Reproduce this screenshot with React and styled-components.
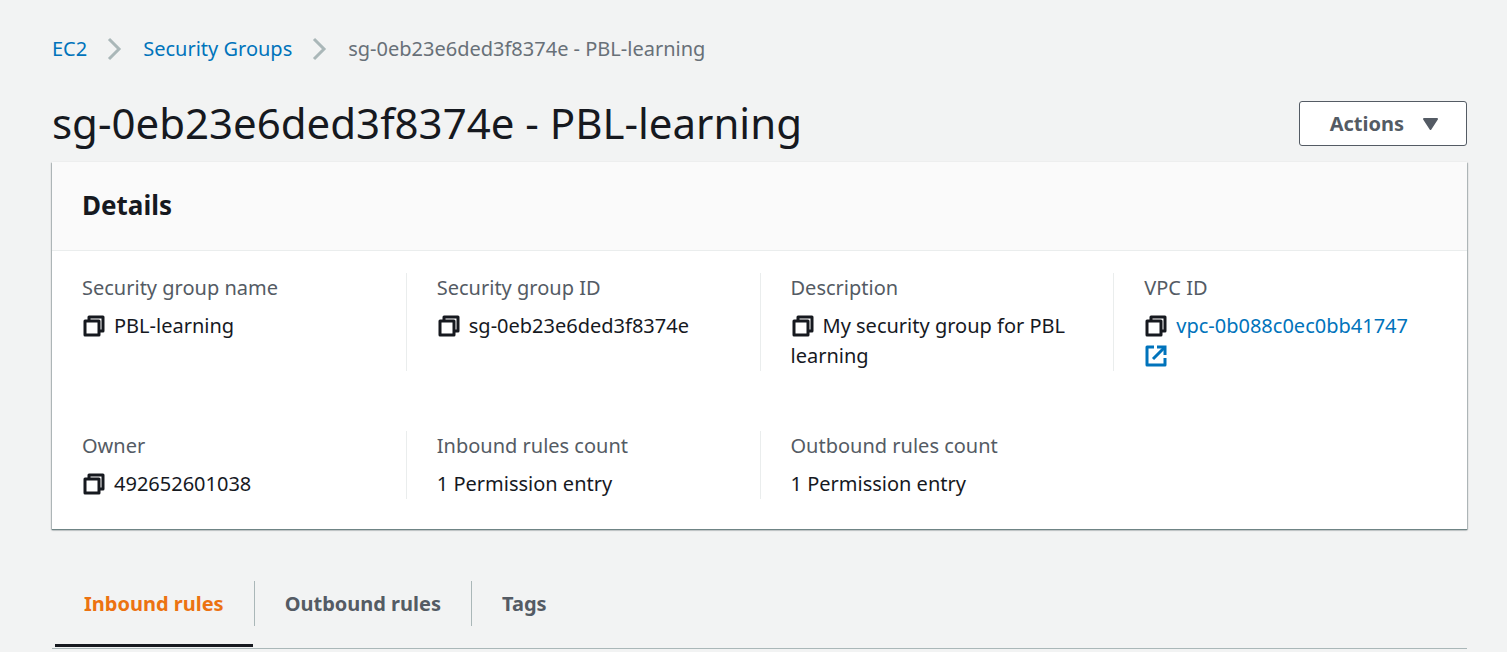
import React from "react";
import styled, { createGlobalStyle } from "styled-components";

const GlobalStyle = createGlobalStyle`
  * { box-sizing: border-box; }
  body {
    margin: 0;
    background: #f2f3f3;
    color: #16191f;
    font-family: "Noto Sans", "Open Sans", sans-serif;
    font-size: 20px;
    line-height: 30px;
  }
  a { color: #0073bb; text-decoration: none; }
`;

const Page = styled.main`
  padding: 34px 40px 0 52px;
`;

const Crumbs = styled.ol`
  display: flex;
  align-items: center;
  gap: 16px;
  margin: 0;
  padding: 0;
  list-style: none;
  color: #687078;
`;

const Crumb = styled.li`
  display: flex;
  align-items: center;
  gap: 16px;
`;

const TitleRow = styled.header`
  display: flex;
  align-items: center;
  justify-content: space-between;
  padding: 29px 0 9px;
`;

const Title = styled.h1`
  margin: 0;
  font-size: 42px;
  font-weight: 400;
  line-height: 60px;
`;

const ActionsButton = styled.button`
  display: flex;
  align-items: center;
  gap: 17px;
  height: 45px;
  padding: 1px 27px 0 30px;
  border: 1px solid #545b64;
  border-radius: 3px;
  background: #fff;
  color: #545b64;
  font: inherit;
  font-weight: 700;
`;

const Panel = styled.section`
  background: #fff;
  box-shadow: 0 1px 1px 0 #6f8485, 0 1px 2px 0 rgba(0, 28, 36, 0.3),
    1px 1px 1px 0 rgba(0, 28, 36, 0.15), -1px 1px 1px 0 rgba(0, 28, 36, 0.15);
`;

const PanelHeader = styled.div`
  padding: 25px 30px 27px;
  border-bottom: 1px solid #eaeded;
  background: #fafafa;
`;

const PanelTitle = styled.h2`
  margin: 0;
  font-size: 26px;
  font-weight: 700;
  line-height: 36px;
`;

const Details = styled.dl`
  display: grid;
  grid-template-columns: repeat(4, 1fr);
  row-gap: 60px;
  margin: 0;
  padding: 22px 0 30px;
`;

const Field = styled.div`
  padding: 0 30px;
  border-left: 1px solid #eaeded;
  &:nth-child(4n + 1) { border-left: 0; }
`;

const Label = styled.dt`
  margin-bottom: 8px;
  color: #545b64;
`;

const Value = styled.dd`
  margin: 0;
`;

const CopyButton = styled.button`
  display: inline;
  margin: 0 8px 0 0;
  padding: 0;
  border: 0;
  background: none;
  color: inherit;
  font: inherit;
`;

const Icon = styled.svg`
  display: inline-block;
  width: ${(p) => p.$size}px;
  height: ${(p) => p.$size}px;
  vertical-align: -5px;
`;

const Tabs = styled.div`
  display: flex;
  margin-top: 52px;
  padding-left: 2px;
  border-bottom: 1px solid #aab7b8;
`;

const Tab = styled.button`
  position: relative;
  height: 45px;
  margin-bottom: 22px;
  padding: 0 30px;
  border: 0;
  border-right: 1px solid #aab7b8;
  background: none;
  color: ${(p) => (p.$active ? "#ec7211" : "#545b64")};
  font: inherit;
  font-weight: 700;
  &:last-child { border-right: 0; }
  &::after {
    content: "";
    position: absolute;
    right: 1px;
    bottom: -21px;
    left: 1px;
    height: 3px;
    background: ${(p) => (p.$active ? "#16191f" : "transparent")};
  }
`;

const Chevron = () => (
  <Icon $size={24} viewBox="0 0 24 24" fill="none" stroke="#aab7b8" strokeWidth="3" aria-hidden="true">
    <path d="M6 2 L16 12 L6 22" />
  </Icon>
);

const Caret = () => (
  <Icon $size={18} viewBox="0 0 18 18" fill="currentColor" stroke="currentColor" strokeWidth="2" strokeLinejoin="round" aria-hidden="true">
    <path d="M3 4 H16 L9.500 14 Z" />
  </Icon>
);

const Copy = ({ text }) => (
  <CopyButton aria-label={`Copy ${text}`}>
    <Icon $size={24} viewBox="0 0 24 24" fill="none" stroke="currentColor" strokeWidth="3" strokeLinejoin="round">
      <path d="M7 7 V3 H21 V17 H17" />
      <path d="M3 7 H17 V21 H3 Z" />
    </Icon>
  </CopyButton>
);

const External = () => (
  <Icon $size={24} viewBox="0 0 24 24" fill="none" stroke="currentColor" strokeWidth="3" role="img" aria-label="Opens in a new tab">
    <path d="M10 3 H3 V21 H21 V14" strokeLinejoin="round" />
    <path d="M13 3 H21 V11" />
    <path d="M20 4 L9 15" />
  </Icon>
);

const fields = [
  { label: "Security group name", value: "PBL-learning", copy: true },
  { label: "Security group ID", value: "sg-0eb23e6ded3f8374e", copy: true },
  { label: "Description", value: "My security group for PBL learning", copy: true },
  { label: "VPC ID", value: "vpc-0b088c0ec0bb41747", copy: true, link: true },
  { label: "Owner", value: "492652601038", copy: true },
  { label: "Inbound rules count", value: "1 Permission entry" },
  { label: "Outbound rules count", value: "1 Permission entry" },
];

const tabs = ["Inbound rules", "Outbound rules", "Tags"];

export default function App() {
  return (
    <Page>
      <GlobalStyle />
      <nav aria-label="Breadcrumb">
        <Crumbs>
          <Crumb><a href="#ec2">EC2</a><Chevron /></Crumb>
          <Crumb><a href="#groups">Security Groups</a><Chevron /></Crumb>
          <Crumb aria-current="page">sg-0eb23e6ded3f8374e - PBL-learning</Crumb>
        </Crumbs>
      </nav>
      <TitleRow>
        <Title>sg-0eb23e6ded3f8374e - PBL-learning</Title>
        <ActionsButton>Actions<Caret /></ActionsButton>
      </TitleRow>
      <Panel>
        <PanelHeader><PanelTitle>Details</PanelTitle></PanelHeader>
        <Details>
          {fields.map((f) => (
            <Field key={f.label}>
              <Label>{f.label}</Label>
              <Value>
                {f.copy && <Copy text={f.label} />}
                {f.link ? <a href="#vpc">{f.value} <External /></a> : f.value}
              </Value>
            </Field>
          ))}
        </Details>
      </Panel>
      <Tabs role="tablist">
        {tabs.map((t, i) => (
          <Tab key={t} role="tab" aria-selected={i === 0} $active={i === 0}>{t}</Tab>
        ))}
      </Tabs>
    </Page>
  );
}
